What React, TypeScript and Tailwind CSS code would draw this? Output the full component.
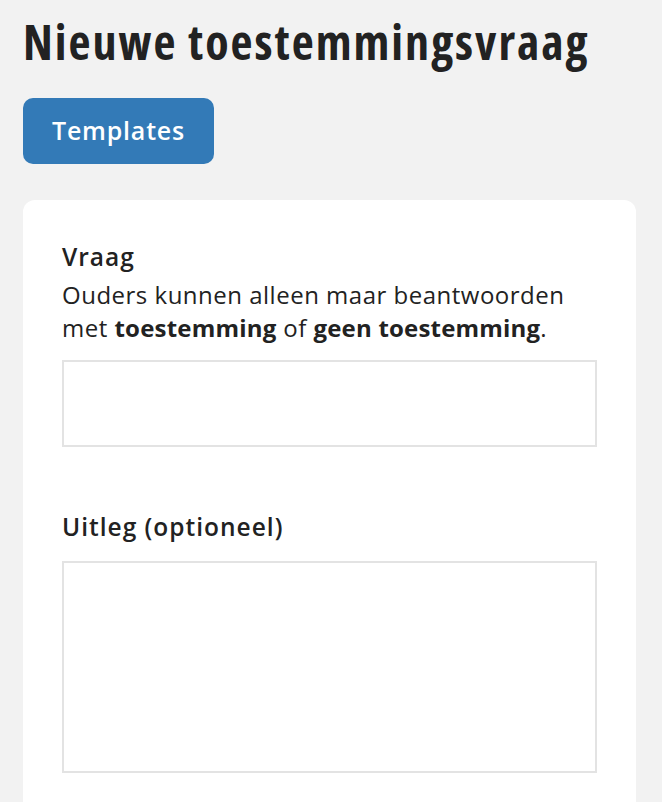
export default function App() {
  return (
    <div className="min-h-screen bg-[#f2f2f2] pl-[23px] pr-[26px] pt-[8px] font-['Open_Sans',sans-serif] text-[#222]">
      <h1 className="text-[48px] font-bold leading-[68px] tracking-[2px] [font-stretch:75%]">
        Nieuwe toestemmingsvraag
      </h1>

      <button className="mt-[22px] h-[66px] w-[191px] rounded-[10px] bg-[#337ab7] text-[25px] font-semibold tracking-[0.8px] text-white">
        Templates
      </button>

      <div className="mt-[36px] rounded-t-[12px] bg-white px-[39px] pt-[40px] pb-[40px]">
        <label className="block text-[24.5px] font-semibold leading-[34px] tracking-[1px]">Vraag</label>
        <p className="mt-[4px] text-[24px] leading-[33px] tracking-[0.5px]">
          Ouders kunnen alleen maar beantwoorden met{" "}
          <b className="font-bold tracking-[0.2px]">toestemming</b> of{" "}
          <b className="font-bold tracking-[0.2px]">geen toestemming</b>.
        </p>
        <input type="text" className="mt-[16px] block h-[87px] w-full border-2 border-[#e3e3e3] bg-white" />

        <label className="mt-[63px] block text-[24.5px] font-semibold leading-[34px] tracking-[1px]">
          Uitleg (optioneel)
        </label>
        <textarea className="mt-[17px] block h-[212px] w-full resize-none border-2 border-[#e3e3e3] bg-white" />
      </div>
    </div>
  );
}
